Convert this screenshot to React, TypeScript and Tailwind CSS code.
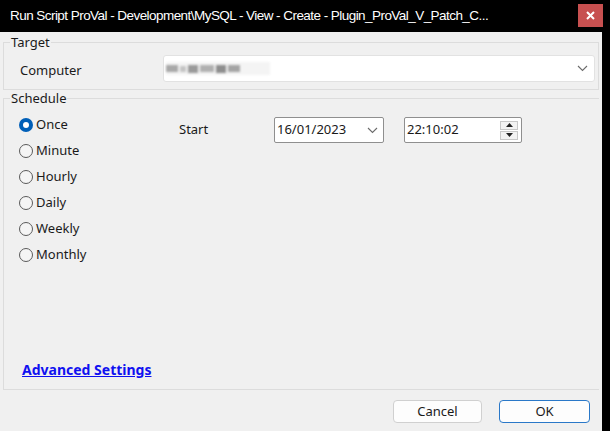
import { useState } from 'react';

const options = ['Once', 'Minute', 'Hourly', 'Daily', 'Weekly', 'Monthly'];

function Radio({ label, checked, onSelect }: { label: string; checked: boolean; onSelect: () => void }) {
  return (
    <div className="flex h-[26px] items-center cursor-default" onClick={onSelect}>
      {checked ? (
        <span className="flex h-[14px] w-[14px] items-center justify-center rounded-full bg-[#005fb8]">
          <span className="h-[6px] w-[6px] rounded-full bg-white" />
        </span>
      ) : (
        <span className="h-[14px] w-[14px] rounded-full border border-[#5a5a5a] bg-[#f5f5f5]" />
      )}
      <span className="ml-[3px] text-[13px] text-[#1a1a1a]">{label}</span>
    </div>
  );
}

function Chevron({ className }: { className?: string }) {
  return (
    <svg width="11" height="7" viewBox="0 0 11 7" className={className}>
      <path d="M1 1 L5.5 5.5 L10 1" fill="none" stroke="#6b6b6b" strokeWidth="1.1" />
    </svg>
  );
}

export default function App() {
  const [schedule, setSchedule] = useState('Once');

  return (
    <div
      className="flex h-[431px] w-[610px] flex-col overflow-hidden bg-black"
      style={{ fontFamily: '"Noto Sans", "Liberation Sans", sans-serif' }}
    >
      {/* title bar */}
      <div className="flex h-[32px] w-[610px] shrink-0 items-start justify-between">
        <div
          className="flex h-[32px] w-[560px] items-center overflow-hidden pl-[10px] text-[13.5px] tracking-[-0.55px] whitespace-nowrap text-white"
          style={{ fontFamily: '"Liberation Sans", sans-serif' }}
        >
          Run Script ProVal - Development\MySQL - View - Create - Plugin_ProVal_V_Patch_C...
        </div>
        <svg width="25" height="23" viewBox="0 0 25 23" className="mt-[4px] mr-[7px] shrink-0">
          <rect x="0" y="0" width="25" height="23" fill="#c75050" />
          <path d="M9 8 L16 15 M16 8 L9 15" stroke="#ffffff" strokeWidth="2" />
        </svg>
      </div>

      <div className="flex flex-1">
        <div className="flex w-[602px] flex-col bg-[#f0f0f0]">
          {/* Target */}
          <fieldset className="mx-[3px] mt-[3px] border border-[#dcdcdc] pb-[7px]">
            <legend className="ml-[6px] px-[1px] text-[13px] leading-[14px] text-[#1a1a1a]">Target</legend>
            <div className="mt-[6px] flex items-center pl-[16px] pr-[3px]">
              <span className="mt-[4px] w-[143px] text-[13px] text-[#1a1a1a]">Computer</span>
              <div className="flex h-[27px] flex-1 items-center justify-between rounded-[3px] border border-[#e2e2e2] bg-white pl-[2px] pr-[6px]">
                <div className="flex h-[13px] w-[104px] items-center gap-[2px] bg-[#f4f4f4] blur-[1px]">
                  <span className="h-[7px] w-[12px] bg-[#a8a8a8]" />
                  <span className="h-[6px] w-[6px] bg-[#c4c4c4]" />
                  <span className="h-[8px] w-[10px] bg-[#9a9a9a]" />
                  <span className="h-[7px] w-[14px] bg-[#b0b0b0]" />
                  <span className="h-[8px] w-[10px] bg-[#8e8e8e]" />
                  <span className="h-[7px] w-[12px] bg-[#a4a4a4]" />
                </div>
                <Chevron />
              </div>
            </div>
          </fieldset>

          {/* Schedule */}
          <fieldset className="mx-[3px] mt-[1px] flex flex-1 flex-col border border-r-0 border-[#dcdcdc]">
            <legend className="ml-[6px] px-[1px] text-[13px] leading-[14px] text-[#1a1a1a]">Schedule</legend>
            <div className="mt-[7px] flex pl-[15px]">
              <div className="flex w-[160px] flex-col">
                {options.map((o) => (
                  <Radio key={o} label={o} checked={schedule === o} onSelect={() => setSchedule(o)} />
                ))}
              </div>
              <div className="mt-[5px] flex h-[26px] items-center">
                <span className="w-[95px] text-[13px] text-[#1a1a1a]">Start</span>
                <div className="flex h-[26px] w-[110px] items-center justify-between rounded-[2px] border border-[#8f8f8f] bg-white pl-[2px] pr-[5px] text-[13px] text-[#1a1a1a]">
                  <span>16/01/2023</span>
                  <Chevron />
                </div>
                <div className="ml-[20px] flex h-[26px] w-[118px] items-center justify-between rounded-[2px] border border-[#8f8f8f] bg-white pl-[2px] pr-[3px] text-[13px] text-[#1a1a1a]">
                  <span>22:10:02</span>
                  <div className="flex flex-col gap-[1px]">
                    <div className="flex h-[9px] w-[18px] items-center justify-center border border-[#c8c8c8] bg-[#f3f3f3]">
                      <svg width="7" height="4" viewBox="0 0 7 4">
                        <path d="M0 4 L3.5 0 L7 4 Z" fill="#222" />
                      </svg>
                    </div>
                    <div className="flex h-[9px] w-[18px] items-center justify-center border border-[#c8c8c8] bg-[#f3f3f3]">
                      <svg width="7" height="4" viewBox="0 0 7 4">
                        <path d="M0 0 L3.5 4 L7 0 Z" fill="#222" />
                      </svg>
                    </div>
                  </div>
                </div>
              </div>
            </div>
            <div className="mt-auto pb-[8px] pl-[18px]">
              <a href="#" className="text-[14px] font-bold text-[#1010f0] underline">
                Advanced Settings
              </a>
            </div>
          </fieldset>

          {/* buttons */}
          <div className="flex justify-end gap-[17px] pt-[10px] pr-[12px] pb-[8px]">
            <button className="h-[23px] w-[89px] rounded-[4px] border border-[#d0d0d0] bg-[#fdfdfd] text-[13px] text-[#1a1a1a]">
              Cancel
            </button>
            <button className="h-[23px] w-[91px] rounded-[4px] border border-[#2a78c8] bg-[#fdfdfd] text-[13px] text-[#1a1a1a]">
              OK
            </button>
          </div>
        </div>
        <div className="flex-1 bg-black" />
      </div>
    </div>
  );
}
